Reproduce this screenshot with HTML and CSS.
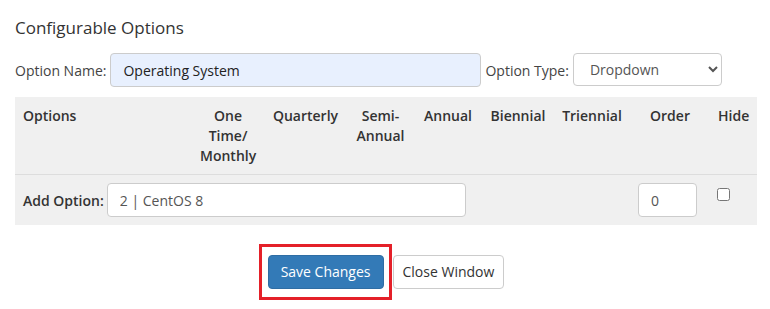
FILE: index.html
```html
<!DOCTYPE html>
<html lang="en">
<head>
    <meta charset="UTF-8">
    <meta name="viewport" content="width=device-width, initial-scale=1.0">
    <title>Configurable Options</title>
    <link rel="stylesheet" href="styles.css">
</head>
<body>
<div class="container">
    <h3>Configurable Options</h3>
    <div class="option-row">
        <label for="optionName">Option Name:</label>
        <input type="text" id="optionName" class="form-control name-input" value="Operating System">
        <label for="optionType">Option Type:</label>
        <select id="optionType" class="form-control type-select">
            <option>Dropdown</option>
            <option>Radio</option>
            <option>Yes/No</option>
            <option>Quantity</option>
        </select>
    </div>

    <table class="options-table">
        <colgroup>
            <col style="width: 177px">
            <col style="width: 72px">
            <col style="width: 83px">
            <col style="width: 67px">
            <col style="width: 68px">
            <col style="width: 72px">
            <col style="width: 76px">
            <col style="width: 80px">
            <col style="width: 47px">
        </colgroup>
        <thead>
            <tr>
                <th class="first">Options</th>
                <th>One Time/ Monthly</th>
                <th>Quarterly</th>
                <th>Semi-Annual</th>
                <th>Annual</th>
                <th>Biennial</th>
                <th>Triennial</th>
                <th>Order</th>
                <th>Hide</th>
            </tr>
        </thead>
        <tbody>
            <tr>
                <td colspan="7">
                    <div class="add-option">
                        <label for="addOption">Add Option:</label>
                        <input type="text" id="addOption" class="form-control add-input" value="2 | CentOS 8">
                    </div>
                </td>
                <td><input type="text" class="form-control order-input" value="0"></td>
                <td><input type="checkbox" class="hide-check"></td>
            </tr>
        </tbody>
    </table>

    <div class="actions">
        <span class="highlight">
            <button class="btn btn-primary">Save Changes</button>
        </span>
        <button class="btn btn-default">Close Window</button>
    </div>
</div>
</body>
</html>
```

FILE: styles.css
```css
body {
    font-family: "Open Sans", Arial, sans-serif;
    font-size: 14px;
    color: #333;
    margin: 0;
    padding: 0;
    background-color: #fff;
}
.container {
    padding: 16px 13px 20px 15px;
}
h3 {
    font-size: 17px;
    font-weight: normal;
    line-height: 24px;
    margin: 0 0 13px;
    color: #333;
}
.option-row {
    display: flex;
    align-items: center;
    gap: 4px;
    margin-bottom: 10px;
}
.option-row label {
    color: #444;
}
.form-control {
    font-family: "Open Sans", Arial, sans-serif;
    font-size: 14px;
    height: 34px;
    box-sizing: border-box;
    padding: 0 12px;
    border: 1px solid #ccc;
    border-radius: 4px;
    color: #555;
    background-color: #fff;
    margin: 0;
}
.name-input {
    width: 371px;
    background-color: #e8f0fe;
    color: #222;
}
.type-select {
    width: 149px;
    height: 33px;
    padding-left: 12px;
    margin-top: -1px;
}
.options-table {
    width: 742px;
    table-layout: fixed;
    border-collapse: collapse;
    background-color: #f0f0f0;
}
.options-table th {
    font-weight: 600;
    line-height: 20px;
    padding: 9px 8px 8px;
    text-align: center;
    vertical-align: top;
    border-bottom: 1px solid #ddd;
}
.options-table th.first {
    text-align: left;
}
.options-table td {
    padding: 8px;
    vertical-align: top;
}
.add-option {
    display: flex;
    align-items: center;
    gap: 3px;
}
.add-option label {
    font-weight: 600;
}
.add-input {
    width: 359px;
}
.order-input {
    width: 59px;
}
.hide-check {
    display: block;
    width: 13px;
    height: 13px;
    margin: 5px 0 0 -1px;
}
.actions {
    display: flex;
    justify-content: center;
    align-items: flex-start;
    gap: 9px;
    margin-top: 30px;
}
.btn {
    font-family: "Open Sans", Arial, sans-serif;
    font-size: 14px;
    line-height: 20px;
    padding: 6px 12px;
    border: 1px solid #ccc;
    border-radius: 4px;
    cursor: pointer;
}
.btn-primary {
    background-color: #337ab7;
    border-color: #2e6da4;
    color: #fff;
}
.btn-default {
    padding: 6px 9px;
    background-color: #fff;
    color: #333;
}
/* red highlight box round the save button */
.highlight {
    position: relative;
    display: block;
}
.highlight .btn {
    display: block;
}
.highlight::after {
    content: "";
    position: absolute;
    top: -11px;
    left: -9px;
    right: -8px;
    bottom: -11px;
    border: 3px solid #e42029;
    pointer-events: none;
}
```
